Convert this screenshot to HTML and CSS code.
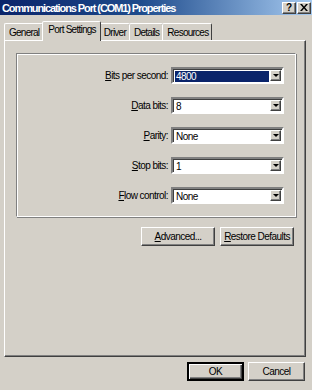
FILE: index.html
```html
<!DOCTYPE html>
<html lang="en">
<head>
<meta charset="UTF-8">
<title>Communications Port (COM1) Properties</title>
<link rel="stylesheet" href="styles.css">
</head>
<body>
<div class="window">
  <div class="titlebar">
    <span class="title">Communications Port (COM1) Properties</span>
    <div class="caption-btns">
      <span class="cbtn">?</span>
      <span class="cbtn">
        <svg width="8" height="7" viewBox="0 0 8 7"><path d="M0 0h2l2 2.5L6 0h2L5 3.5 8 7H6L4 4.5 2 7H0l3-3.5z" fill="#000"/></svg>
      </span>
    </div>
  </div>

  <div class="tabs">
    <span class="tab">General</span>
    <span class="tab active">Port Settings</span>
    <span class="tab">Driver</span>
    <span class="tab">Details</span>
    <span class="tab">Resources</span>
  </div>

  <div class="panel">
    <div class="group">
      <div class="row">
        <label><u>B</u>its per second:</label>
        <div class="combo selected"><span class="value">4800</span><span class="drop"><i class="arrow"></i></span></div>
      </div>
      <div class="row">
        <label><u>D</u>ata bits:</label>
        <div class="combo"><span class="value">8</span><span class="drop"><i class="arrow"></i></span></div>
      </div>
      <div class="row">
        <label><u>P</u>arity:</label>
        <div class="combo"><span class="value">None</span><span class="drop"><i class="arrow"></i></span></div>
      </div>
      <div class="row">
        <label><u>S</u>top bits:</label>
        <div class="combo"><span class="value">1</span><span class="drop"><i class="arrow"></i></span></div>
      </div>
      <div class="row">
        <label><u>F</u>low control:</label>
        <div class="combo"><span class="value">None</span><span class="drop"><i class="arrow"></i></span></div>
      </div>
    </div>
    <div class="actions">
      <button class="btn wide"><u>A</u>dvanced...</button>
      <button class="btn wide"><u>R</u>estore Defaults</button>
    </div>
  </div>

  <div class="footer">
    <button class="btn default">OK</button>
    <button class="btn">Cancel</button>
  </div>
</div>
</body>
</html>
```

FILE: styles.css
```css
body {
  margin: 0;
  background-color: #d4d0c8;
  font-family: "Liberation Sans", Arial, sans-serif;
  font-size: 10px;
  letter-spacing: -0.55px;
  color: #000;
}
.window {
  width: 312px;
  height: 390px;
  overflow: hidden;
  background-color: #d4d0c8;
}
.titlebar {
  height: 15px;
  display: flex;
  align-items: center;
  justify-content: space-between;
  padding-left: 2px;
  background: linear-gradient(to right, #0a246a 0%, #1e4b8c 45%, #a6caf0 100%);
}
.title {
  color: #fff;
  font-weight: bold;
  font-size: 11px;
  letter-spacing: -1.1px;
}
.caption-btns {
  display: flex;
  gap: 1px;
  padding-right: 1px;
}
.cbtn {
  width: 12px;
  height: 10px;
  display: flex;
  align-items: center;
  justify-content: center;
  background-color: #d4d0c8;
  border: 1px solid;
  border-color: #fff #404040 #404040 #fff;
  box-shadow: inset -1px -1px #808080;
  font-weight: bold;
  font-size: 10px;
  letter-spacing: 0;
  line-height: 10px;
}
.tabs {
  display: flex;
  align-items: flex-end;
  height: 25px;
  padding-left: 5px;
  letter-spacing: -0.75px;
}
.tab {
  height: 16px;
  line-height: 17px;
  padding: 0 3px 0 4px;
  border: 1px solid;
  border-bottom: none;
  border-color: #fff #404040 transparent #fff;
  border-radius: 2px 2px 0 0;
  position: relative;
  margin-left: -1px;
}
.tab.active {
  height: 19px;
  line-height: 16px;
  margin: 0 -1px 0 -1px;
  padding: 0 4px 0 5px;
  top: 1px;
  background-color: #d4d0c8;
  z-index: 1;
}
.panel {
  margin-left: 4px;
  width: 289px;
  height: 303px;
  border: 1px solid;
  border-color: #fff #404040 #404040 #fff;
  box-shadow: inset -1px -1px #808080;
  padding: 12px 0 0 11px;
}
.group {
  width: 278px;
  height: 149px;
  border: 1px solid;
  border-color: #808080 #fff #fff #808080;
  box-shadow: inset 1px 1px #fff, 1px 1px #808080;
  display: flex;
  flex-direction: column;
  gap: 13px;
  padding-top: 13px;
}
.row {
  display: flex;
  align-items: center;
  justify-content: flex-end;
  gap: 3px;
  padding-right: 11px;
}
.row label {
  text-align: right;
}
.combo {
  width: 109px;
  height: 13px;
  display: flex;
  align-items: center;
  background-color: #fff;
  border: 2px solid;
  border-color: #808080 #fff #fff #808080;
  box-shadow: inset 1px 1px #404040;
}
.value {
  flex: 1;
  height: 11px;
  line-height: 11px;
  margin: 1px 1px 0 2px;
  padding-left: 1px;
}
.combo.selected .value {
  background-color: #0a246a;
  color: #fff;
}
.drop {
  width: 11px;
  height: 11px;
  margin-right: 1px;
  display: flex;
  align-items: center;
  justify-content: center;
  background-color: #d4d0c8;
  border: 1px solid;
  border-color: #fff #404040 #404040 #fff;
  box-sizing: border-box;
  box-shadow: inset -1px -1px #808080;
}
.arrow {
  width: 0;
  height: 0;
  border-left: 3px solid transparent;
  border-right: 3px solid transparent;
  border-top: 3px solid #000;
}
.actions {
  display: flex;
  justify-content: flex-end;
  gap: 5px;
  margin-top: 10px;
  padding-right: 11px;
}
.btn {
  height: 19px;
  padding: 0;
  white-space: nowrap;
  background-color: #d4d0c8;
  border: 1px solid;
  border-color: #fff #404040 #404040 #fff;
  box-shadow: inset -1px -1px #808080;
  font-family: inherit;
  font-size: 10px;
  letter-spacing: -0.55px;
  color: #000;
}
.btn.wide {
  width: 74px;
}
.footer {
  display: flex;
  justify-content: flex-end;
  gap: 4px;
  padding-right: 7px;
  margin-top: 5px;
}
.footer .btn {
  width: 57px;
}
.btn.default {
  border: 2px solid;
  border-color: #000;
  box-shadow: inset 1px 1px #fff, inset -1px -1px #404040, inset -2px -2px #808080;
}
```
